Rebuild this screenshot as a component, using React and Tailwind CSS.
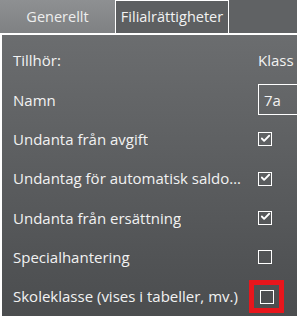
import { Check } from 'lucide-react';

const rows = [
  { label: 'Undanta från avgift', checked: true },
  { label: 'Undantag för automatisk saldoreglering', checked: true },
  { label: 'Undanta från ersättning', checked: true },
  { label: 'Specialhantering', checked: false },
  { label: 'Skoleklasse (vises i tabeller, mv.)', checked: false, highlight: true },
];

const Box = ({ checked, highlight }) => {
  const box = (
    <div className="w-[14px] h-[14px] border-[1.5px] border-white flex items-center justify-center">
      {checked && <Check size={13} strokeWidth={4} className="text-white -mt-[2px] ml-[1px]" />}
    </div>
  );
  if (!highlight) return box;
  return (
    <div className="border-[5px] border-[#e8161c] w-[35px] h-[33px] flex items-center justify-center -ml-[9px] mt-[1px]">
      {box}
    </div>
  );
};

const App = () => {
  return (
    <div
      className="w-[297px] h-[316px] overflow-hidden bg-[#5a5c5e] text-[#f2f2f2]"
      style={{ fontFamily: '"Open Sans", "Noto Sans", sans-serif' }}
    >
      {/* tabs */}
      <div className="flex h-[33px] bg-[#606264]">
        <div className="w-[115px] bg-gradient-to-b from-[#8e9092] to-[#7f8183] flex items-center justify-center text-[14.5px] text-[#eeeeee]">
          Generellt
        </div>
        <div className="w-[114px] border-x border-t border-white bg-[#5d5f61] flex items-center justify-center text-[14.5px]">
          Filialrättigheter
        </div>
      </div>
      <div className="h-[283px] border-t-2 border-l-2 border-white bg-gradient-to-b from-[#6b6d6f] to-[#4b4d4f] pt-[6px]">
        <div className="grid grid-cols-[256px_1fr] text-[15px]">
          <div className="h-[39.3px] flex items-center pl-[11px]">Tillhör:</div>
          <div className="h-[39.3px] flex items-center">Klass</div>
          <div className="h-[39.3px] flex items-center pl-[11px]">Namn</div>
          <div className="h-[39.3px] flex items-center">
            <div className="h-[31px] w-[60px] border border-white flex items-center pl-[5px] text-[15px]">7a</div>
          </div>
          {rows.map((r) => (
            <div key={r.label} className="contents">
              <div className="h-[39.3px] flex items-center pl-[11px] pr-[14px] min-w-0">
                <span className="truncate">{r.label}</span>
              </div>
              <div className="h-[39.3px] flex items-center">
                <Box checked={r.checked} highlight={r.highlight} />
              </div>
            </div>
          ))}
        </div>
      </div>
    </div>
  );
};

export default App;
